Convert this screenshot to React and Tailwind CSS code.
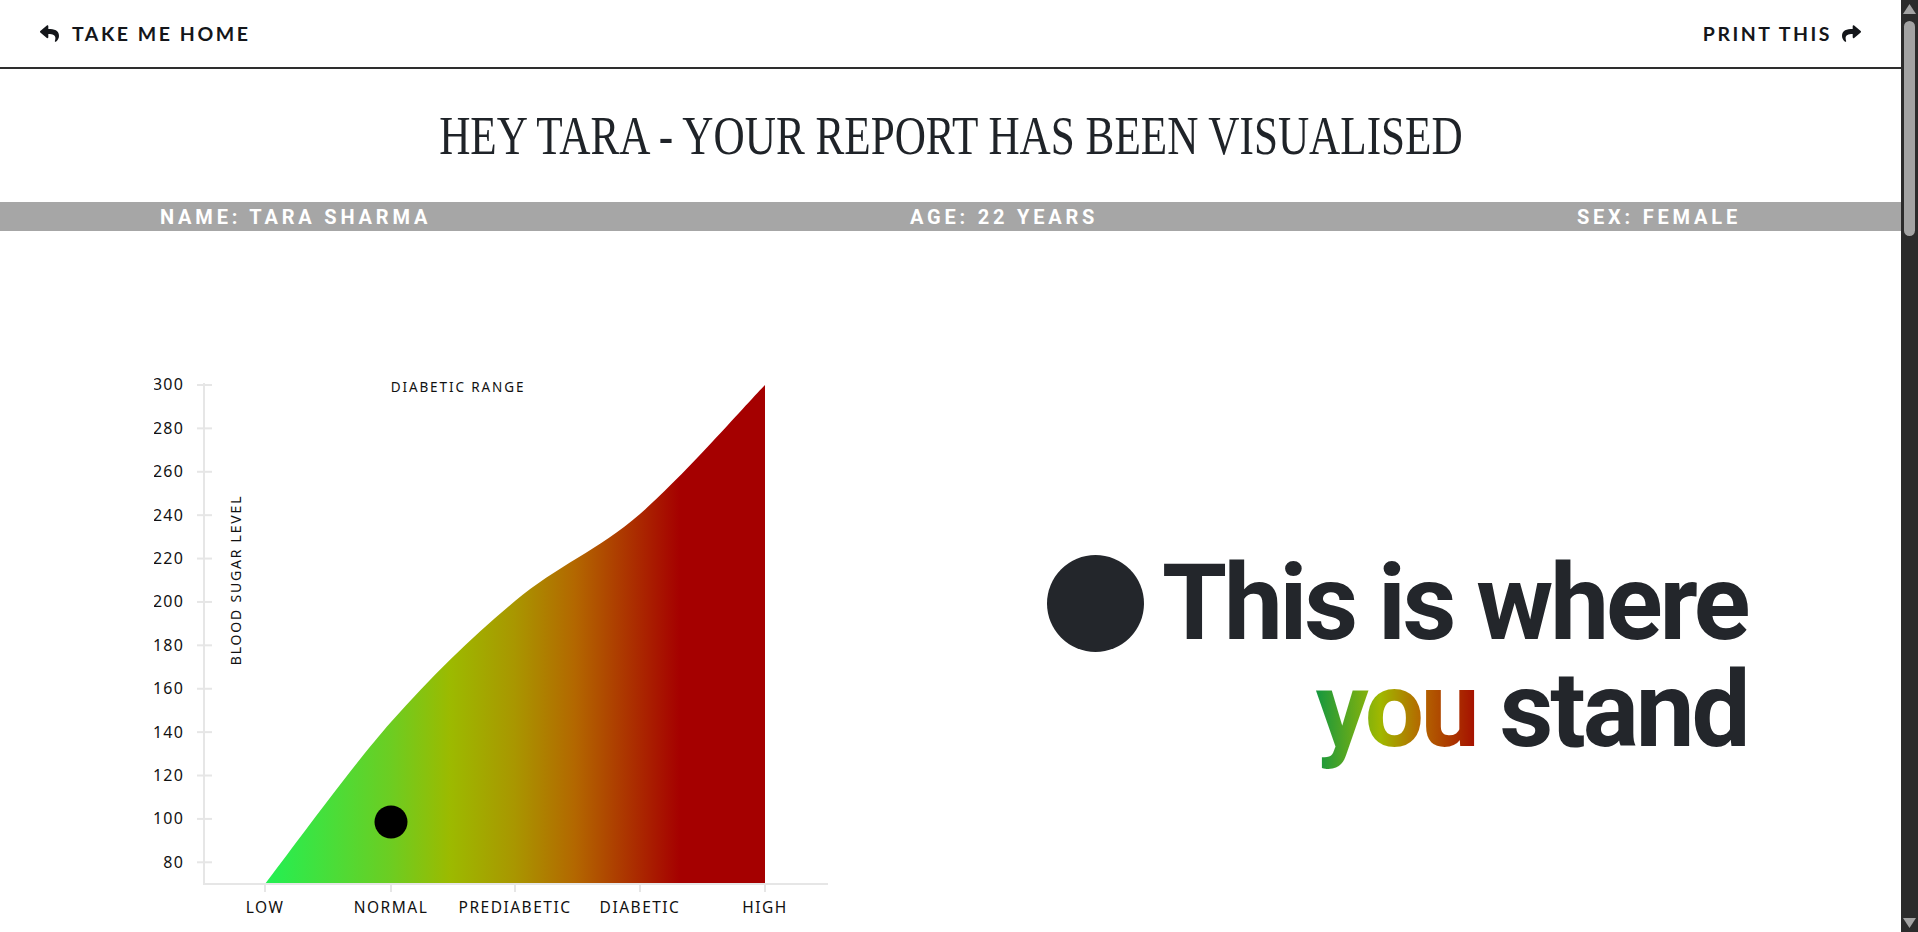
import React from "react";
import { FaReply, FaShare } from "react-icons/fa";

// Chart geometry is in page pixels; the svg viewBox starts where the chart is clipped.
const Y_TICKS = [80, 100, 120, 140, 160, 180, 200, 220, 240, 260, 280, 300];
const X_TICKS = [
    { label: "LOW", x: 265 },
    { label: "NORMAL", x: 391 },
    { label: "PREDIABETIC", x: 515 },
    { label: "DIABETIC", x: 640 },
    { label: "HIGH", x: 765 },
];
const yOf = (v) => 884 - (v - 70) * 2.1696;

const AREA =
    "M265,884 C286,857 349.3,769.2 391,722 C432.7,674.8 473.5,635.7 515,601 " +
    "C556.5,566.3 598.3,550 640,514 C681.7,478 744.2,406.5 765,385 L765,884 Z";

function SugarChart() {
    return (
        <svg
            width="688"
            height="560"
            viewBox="154 370 688 560"
            className="shrink-0 block"
            style={{ fontFamily: "'Noto Sans', 'Liberation Sans', sans-serif" }}
        >
            <defs>
                <linearGradient id="range" gradientUnits="userSpaceOnUse" x1="265" y1="0" x2="765" y2="0">
                    <stop offset="0" stopColor="#22f053" />
                    <stop offset="0.25" stopColor="#6ccd22" />
                    <stop offset="0.37" stopColor="#9cba00" />
                    <stop offset="0.5" stopColor="#a99600" />
                    <stop offset="0.62" stopColor="#b36700" />
                    <stop offset="0.83" stopColor="#a50000" />
                    <stop offset="1" stopColor="#a50000" />
                </linearGradient>
            </defs>

            {/* y axis */}
            <line x1="204" y1="383" x2="204" y2="885" stroke="#e6e6e6" strokeWidth="2" />
            {Y_TICKS.map((v) => (
                <g key={v}>
                    <line x1="197" y1={yOf(v)} x2="212" y2={yOf(v)} stroke="#e6e6e6" strokeWidth="2" />
                    <text x="184" y={yOf(v)} dy="5.5" textAnchor="end" fontSize="16" fill="#111" letterSpacing="1.2">
                        {v}
                    </text>
                </g>
            ))}

            <path d={AREA} fill="url(#range)" />

            {/* x axis */}
            <line x1="203" y1="884" x2="828" y2="884" stroke="#e6e6e6" strokeWidth="2" />
            {X_TICKS.map((t) => (
                <g key={t.label}>
                    <line x1={t.x} y1="884" x2={t.x} y2="892" stroke="#e6e6e6" strokeWidth="2" />
                    <text x={t.x} y="913" textAnchor="middle" fontSize="15.5" fill="#111" letterSpacing="1.5">
                        {t.label}
                    </text>
                </g>
            ))}

            <text x="458" y="392" textAnchor="middle" fontSize="13.5" fill="#111" letterSpacing="1.9">
                DIABETIC RANGE
            </text>
            <text
                x="241"
                y="580"
                textAnchor="middle"
                fontSize="14"
                fill="#111"
                letterSpacing="1.8"
                transform="rotate(-90 241 580)"
            >
                BLOOD SUGAR LEVEL
            </text>

            <circle cx="391" cy="822" r="16.5" fill="#000" />
        </svg>
    );
}

function Scrollbar() {
    return (
        <div className="w-[17px] shrink-0 bg-[#2b2b2b] flex flex-col items-center pt-[4px] pb-[4px]">
            <svg width="13" height="10" viewBox="0 0 13 10">
                <path d="M6.5 0 L13 10 L0 10 Z" fill="#a3a3a3" />
            </svg>
            <div className="mt-[7px] w-[11px] h-[215px] rounded-full bg-[#a3a3a3]" />
            <div className="flex-1" />
            <svg width="13" height="10" viewBox="0 0 13 10">
                <path d="M0 0 L13 0 L6.5 10 Z" fill="#a3a3a3" />
            </svg>
        </div>
    );
}

export default function App() {
    return (
        <div className="h-screen overflow-hidden bg-white text-[#16181c] flex">
            <main className="flex-1 min-w-0">
                {/* Header */}
                <header className="h-[69px] border-b-2 border-[#2e2e2e] px-10 flex items-center justify-between font-['Lato','Liberation_Sans',sans-serif] font-bold text-[19.5px] tracking-[0.13em] text-[#14161a]">
                    <a href="#" className="inline-flex items-center gap-[13px]">
                        <FaReply className="text-[19px]" />
                        <span>TAKE ME HOME</span>
                    </a>
                    <a href="#" className="inline-flex items-center gap-[10px]">
                        <span>PRINT THIS</span>
                        <FaShare className="text-[19px]" />
                    </a>
                </header>

                {/* Title */}
                <div className="h-[133px] flex items-center justify-center">
                    <h1 className="font-['Liberation_Serif',serif] font-normal text-[55px] leading-none text-[#1f2328] scale-x-[0.785] whitespace-nowrap">
                        HEY TARA - YOUR REPORT HAS BEEN VISUALISED
                    </h1>
                </div>

                {/* Patient strip */}
                <div className="h-[29px] bg-[#a6a6a6] px-[160px] flex items-center justify-between text-white font-['Roboto','Liberation_Sans',sans-serif] font-bold text-[20px] tracking-[0.19em]">
                    <span>NAME: TARA SHARMA</span>
                    <span>AGE: 22 YEARS</span>
                    <span>SEX: FEMALE</span>
                </div>

                {/* Chart + callout */}
                <section className="flex items-start">
                    <div className="mt-[139px] ml-[154px]">
                        <SugarChart />
                    </div>
                    <div className="mt-[319px] ml-[205px] flex flex-col items-end font-['Roboto','Liberation_Sans',sans-serif] font-bold text-[105px] leading-[107px] tracking-[-0.03em] text-[#23262b]">
                        <div className="flex items-center gap-[18px]">
                            <span className="w-[97px] h-[97px] rounded-full bg-[#23262b] shrink-0" />
                            <span>This is where</span>
                        </div>
                        <div>
                            <span className="bg-[linear-gradient(90deg,#14973f_0%,#a0b800_40%,#b46800_65%,#a50d00_100%)] bg-clip-text text-transparent">
                                you
                            </span>{" "}
                            stand
                        </div>
                    </div>
                </section>
            </main>
            <Scrollbar />
        </div>
    );
}
